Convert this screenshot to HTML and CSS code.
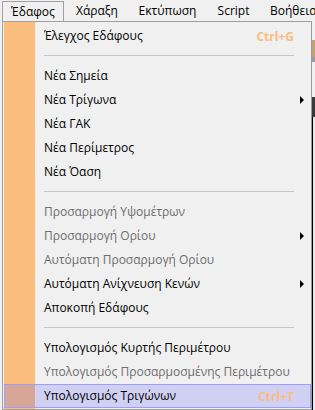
FILE: index.html
```html
<!DOCTYPE html>
<html lang="el">
<head>
<meta charset="utf-8">
<link rel="stylesheet" href="styles.css">
</head>
<body>
<div class="menubar">
  <div class="mb-item open">Έδαφος</div>
  <div class="mb-item w2">Χάραξη</div>
  <div class="mb-item w3">Εκτύπωση</div>
  <div class="mb-item w4">Script</div>
  <div class="mb-item w5">Βοήθεια</div>
</div>
<div class="stage">
  <div class="dropdown">
    <div class="item"><span class="label">Έλεγχος Εδάφους</span><span class="key">Ctrl+G</span><span class="sub"></span></div>
    <div class="sep"></div>
    <div class="item"><span class="label">Νέα Σημεία</span><span class="key"></span><span class="sub"></span></div>
    <div class="item"><span class="label">Νέα Τρίγωνα</span><span class="key"></span><span class="sub"><i class="arrow"></i></span></div>
    <div class="item"><span class="label">Νέα ΓΑΚ</span><span class="key"></span><span class="sub"></span></div>
    <div class="item"><span class="label">Νέα Περίμετρος</span><span class="key"></span><span class="sub"></span></div>
    <div class="item"><span class="label">Νέα Όαση</span><span class="key"></span><span class="sub"></span></div>
    <div class="sep"></div>
    <div class="item disabled"><span class="label">Προσαρμογή Υψομέτρων</span><span class="key"></span><span class="sub"></span></div>
    <div class="item disabled"><span class="label">Προσαρμογή Ορίου</span><span class="key"></span><span class="sub"><i class="arrow"></i></span></div>
    <div class="item disabled"><span class="label">Αυτόματη Προσαρμογή Ορίου</span><span class="key"></span><span class="sub"></span></div>
    <div class="item"><span class="label">Αυτόματη Ανίχνευση Κενών</span><span class="key"></span><span class="sub"><i class="arrow"></i></span></div>
    <div class="item"><span class="label">Αποκοπή Εδάφους</span><span class="key"></span><span class="sub"></span></div>
    <div class="sep"></div>
    <div class="item"><span class="label">Υπολογισμός Κυρτής Περιμέτρου</span><span class="key"></span><span class="sub"></span></div>
    <div class="item disabled"><span class="label">Υπολογισμός Προσαρμοσμένης Περιμέτρου</span><span class="key"></span><span class="sub"></span></div>
    <div class="item hover"><span class="label">Υπολογισμός Τριγώνων</span><span class="key">Ctrl+T</span><span class="sub"></span></div>
  </div>
  <div class="edge"><div class="edge-line"></div><div class="edge-bg"></div></div>
</div>
</body>
</html>
```
FILE: styles.css
```css
html, body {
  margin: 0;
  padding: 0;
}
body {
  width: 315px;
  height: 410px;
  overflow: hidden;
  background: #f0f0f0;
  font-family: "Open Sans", "Liberation Sans", Arial, sans-serif;
  font-size: 12px;
  color: #000;
}
.menubar {
  display: flex;
  height: 21px;
  white-space: nowrap;
  overflow: hidden;
}
.mb-item {
  flex: none;
  text-align: center;
  line-height: 20px;
  height: 20px;
  margin-top: 1px;
}
.mb-item.open {
  margin-left: 2px;
  width: 60px;
  border: 1px solid #a0a0a0;
  border-bottom: none;
  line-height: 19px;
}
.mb-item.w2 { width: 66px; }
.mb-item.w3 { width: 75px; }
.mb-item.w4 { width: 57px; }
.mb-item.w5 { width: 62px; text-align: left; padding-left: 8px; }

.stage {
  display: flex;
  height: 389px;
}
.dropdown {
  flex: none;
  width: 308px;
  margin-left: 2px;
  border: 1px solid #a0a0a0;
  border-right-color: #999;
  padding: 2px 0 1px;
  background: linear-gradient(to right, #f0f0f0 0 1px, #fbbd7e 1px 32px, #f0f0f0 32px);
}
.item {
  display: grid;
  grid-template-columns: 1fr auto 16px;
  align-items: center;
  height: 24px;
  margin-left: 1px;
  padding-left: 39px;
  box-sizing: border-box;
  border: 1px solid transparent;
  white-space: nowrap;
}
.item.disabled { color: #6d6d6d; }
.item.hover {
  background: rgba(70, 70, 255, 0.19);
  border-color: #9d9dfa;
}
.label { line-height: 22px; }
.key {
  font-weight: bold;
  color: #fbbd7e;
}
.sub {
  display: flex;
  align-items: center;
  padding-left: 6px;
}
.arrow {
  display: block;
  width: 0;
  height: 0;
  border-top: 4px solid transparent;
  border-bottom: 4px solid transparent;
  border-left: 4px solid #000;
}
.sep {
  height: 16px;
  margin: 0 17px 0 41px;
  background: linear-gradient(to bottom, transparent 0 7px, #c5c5c5 7px 8px, transparent 8px);
}
.edge {
  flex: none;
  width: 3px;
  display: flex;
  background: linear-gradient(to bottom, #f0f0f0 0 19px, #c6a070 19px 36px, #9c9c9c 36px 41px, #f0f0f0 41px 76px, #3a3a3a 76px 96px, transparent 96px);
}
.edge-line {
  width: 1px;
  background: linear-gradient(to bottom, transparent 0 96px, #000 96px);
}
.edge-bg {
  width: 2px;
  background: linear-gradient(to bottom, transparent 0 96px, #e6e6e6 96px);
}
```
